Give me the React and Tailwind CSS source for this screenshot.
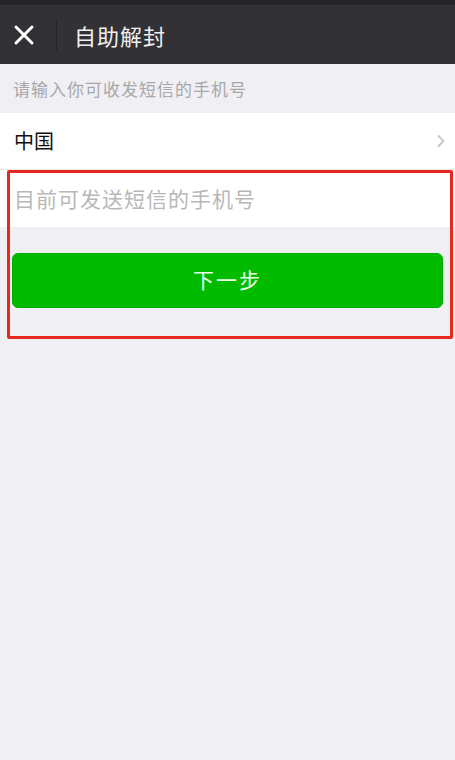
import { X, ChevronRight } from "lucide-react";

export default function App() {
  return (
    <div
      className="relative w-[455px] h-[760px] bg-[#efeff4] overflow-hidden"
      style={{ fontFamily: '"Noto Sans CJK SC", "Noto Sans", sans-serif' }}
    >
      {/* status strip + title bar */}
      <div className="h-[5px] bg-[#242427]" />
      <header className="h-[59px] bg-[#323236] flex items-center">
        <div className="w-[56px] flex items-center pl-[8px]">
          <X size={32} strokeWidth={2.2} className="text-white" />
        </div>
        <div className="w-px h-[32px] bg-[#262629]" />
        <h1 className="ml-[17px] text-[22px] leading-none text-[#f0f0f0] tracking-[1px]">
          自助解封
        </h1>
      </header>

      <div className="h-[49px] flex items-center px-[13px] text-[17px] tracking-[1px] text-[#a8a8a8]">
        请输入你可收发短信的手机号
      </div>

      <div className="h-[57px] bg-white flex items-center justify-between pl-[14px] pr-[4px] border-b border-[#e8e8e8]">
        <span className="text-[20px] text-[#111]">中国</span>
        <ChevronRight size={20} strokeWidth={2.4} className="text-[#c7c7cc]" />
      </div>

      <div className="h-[57px] bg-white flex items-center px-[14px] text-[21px] tracking-[1px] text-[#b8b8b8]">
        目前可发送短信的手机号
      </div>

      <div className="pt-[26px] px-[12px]">
        <button className="w-full h-[55px] rounded-[6px] bg-[#00bb00] border border-[#01a901] text-[21px] tracking-[2px] text-[#e8ffe8] pb-[2px]">
          下一步
        </button>
      </div>

      {/* red annotation box */}
      <div className="absolute left-[7px] top-[170px] w-[446px] h-[169px] border-[3px] border-[#e8271e] rounded-[2px] pointer-events-none" />
    </div>
  );
}
